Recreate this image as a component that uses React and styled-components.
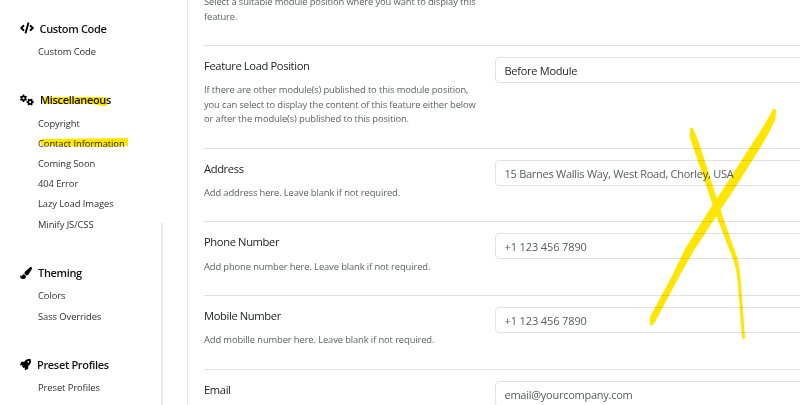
import React from "react";
import styled, { createGlobalStyle } from "styled-components";
import { FaCode, FaPaintBrush, FaRocket } from "react-icons/fa";
import { FaGears } from "react-icons/fa6";

const GlobalStyle = createGlobalStyle`
  * { box-sizing: border-box; }
  body {
    margin: 0;
    background: #fff;
    font-family: "Open Sans", "Noto Sans", sans-serif;
    overflow: hidden;
  }
`;

const Page = styled.div`
  position: relative;
  display: flex;
  height: 405px;
  overflow: hidden;
`;

const Sidebar = styled.aside`
  display: flex;
  width: 188px;
  flex: none;
  border-right: 1px solid #ebebeb;
`;

const Menu = styled.nav`
  width: 161px;
  padding: 16.5px 0 0 20px;
`;

const Scrollbar = styled.div`
  width: 1.5px;
  margin-top: 223px;
  background: #e9e9e9;
`;

const Group = styled.section`
  margin-bottom: 27px;
`;

const GroupTitle = styled.h3`
  display: flex;
  align-items: center;
  gap: ${props => props.gap}px;
  height: 24.5px;
  padding-bottom: 1px;
  margin: 0;
  font-size: 11px;
  font-weight: 600;
  letter-spacing: -0.33px;
  color: #111;
  white-space: nowrap;

  svg { flex: none; color: #000; }
`;

const MenuItem = styled.a`
  display: block;
  height: 20.2px;
  padding-left: 18px;
  font-size: 9.4px;
  line-height: 21px;
  letter-spacing: -0.08px;
  color: #303030;
  white-space: nowrap;
`;

const Content = styled.main`
  flex: 1;
  min-width: 0;
  padding-left: 16px;
  margin-top: -43.3px;
`;

const Row = styled.div`
  display: grid;
  grid-template-columns: 291px 1fr;
  align-items: start;
  height: ${props => props.height || 73.6}px;
  padding-top: 11px;
  border-top: 1px solid #e0e2e4;
`;

const Label = styled.div`
  height: 20px;
  font-size: 11.2px;
  line-height: 18.6px;
  letter-spacing: -0.38px;
  color: #1a1f23;
`;

const Help = styled.div`
  margin-top: 6.2px;
  font-size: 9.4px;
  line-height: 14.7px;
  letter-spacing: -0.12px;
  color: #5e6164;
  white-space: nowrap;
`;

const Field = styled.div`
  height: 26px;
  margin-right: -10px;
  padding-left: 8.5px;
  border: 1px solid #e0e2e5;
  border-radius: 4px;
  font-size: 11px;
  line-height: 25px;
  letter-spacing: ${props => (props.$numeric ? "-0.12px" : "-0.26px")};
  color: ${props => (props.$dark ? "#24282c" : "#575c60")};
  white-space: nowrap;
`;

const Marker = styled.svg`
  position: absolute;
  top: 0;
  left: 0;
  mix-blend-mode: multiply;
  pointer-events: none;
`;

const groups = [
  { title: "Custom Code", icon: <FaCode size={14} />, gap: 5.5, items: ["Custom Code"] },
  {
    title: "Miscellaneous",
    icon: <FaGears size={14} />,
    gap: 6,
    items: ["Copyright", "Contact Information", "Coming Soon", "404 Error", "Lazy Load Images", "Minify JS/CSS"],
  },
  { title: "Theming", icon: <FaPaintBrush size={12} />, gap: 6, items: ["Colors", "Sass Overrides"] },
  { title: "Preset Profiles", icon: <FaRocket size={11} />, gap: 6, items: ["Preset Profiles"] },
];

const rows = [
  {
    id: "position",
    help: ["Select a suitable module position where you want to display this", "feature."],
    height: 88.2,
  },
  {
    id: "load",
    label: "Feature Load Position",
    help: [
      "If there are other module(s) published to this module position,",
      "you can select to display the content of this feature either below",
      "or after the module(s) published to this position.",
    ],
    value: "Before Module",
    dark: true,
    height: 102.9,
  },
  {
    id: "address",
    label: "Address",
    help: ["Add address here. Leave blank if not required."],
    value: "15 Barnes Wallis Way, West Road, Chorley, USA",
  },
  {
    id: "phone",
    label: "Phone Number",
    help: ["Add phone number here. Leave blank if not required."],
    value: "+1 123 456 7890",
    numeric: true,
  },
  {
    id: "mobile",
    label: "Mobile Number",
    help: ["Add mobille number here. Leave blank if not required."],
    value: "+1 123 456 7890",
    numeric: true,
  },
  { id: "email", label: "Email", help: [], value: "email@yourcompany.com" },
];

const App = () => (
  <>
    <GlobalStyle />
    <Page>
      <Sidebar>
        <Menu>
          {groups.map(group => (
            <Group key={group.title}>
              <GroupTitle gap={group.gap}>
                {group.icon}
                {group.title}
              </GroupTitle>
              {group.items.map(item => (
                <MenuItem key={item}>{item}</MenuItem>
              ))}
            </Group>
          ))}
        </Menu>
        <Scrollbar />
      </Sidebar>
      <Content>
        {rows.map(row => (
          <Row key={row.id} height={row.height}>
            <div>
              <Label>{row.label}</Label>
              <Help>
                {row.help.map(line => (
                  <div key={line}>{line}</div>
                ))}
              </Help>
            </div>
            {row.value && (
              <Field $dark={row.dark} $numeric={row.numeric}>{row.value}</Field>
            )}
          </Row>
        ))}
      </Content>
      <Marker width="800" height="405" fill="#ffe600">
        <path d="M44 97 L106 97 Q109 98 107 106 L102 106 L92 104 L46 104 Q43 101 44 97 Z" />
        <path d="M42 139 L128 138 L128 146 L104 147 L42 146 Q39 142 42 139 Z" />
        <path d="M773 109 Q776 108 776 111 L775.5 119 Q769 134 757 153 L733 191 L717 215 L693 252 L680 275 L655 322 Q651 328 650 324 L650 317 L672 276 L685 249 L708 212 L729 180 L752 144 Q765 125 773 109 Z" />
        <path d="M690 128 L693 128 L699 143 L717 199 L727 229 L737 257 Q740 268 741 285 L745 337 Q744 341 742 338 L738 285 Q737 270 733 259 L716 215 L702 173 L690 138 Z" />
      </Marker>
    </Page>
  </>
);

export default App;
